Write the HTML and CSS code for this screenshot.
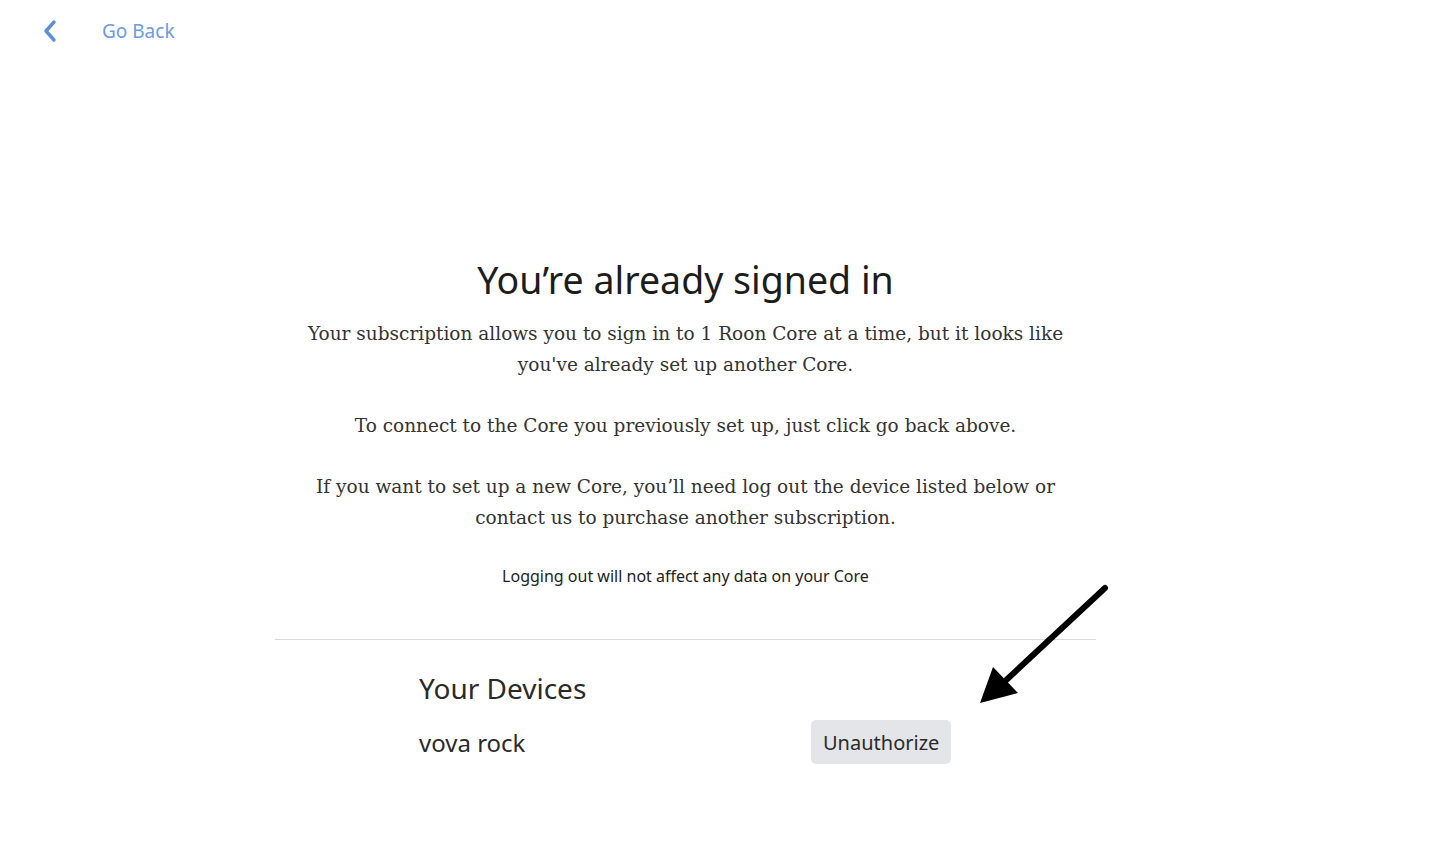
FILE: index.html
```html
<!DOCTYPE html>
<html lang="en">
<head>
<meta charset="utf-8">
<title>You're already signed in</title>
<link rel="stylesheet" href="styles.css">
</head>
<body>
<header class="topbar">
  <a class="back" href="#">
    <svg class="chev" width="16" height="24" viewBox="0 0 16 24"><path d="M12 3 L4 12 L12 21" fill="none" stroke="#5d8fd8" stroke-width="3.4" stroke-linecap="round" stroke-linejoin="round"/></svg>
    <span class="back-label">Go Back</span>
  </a>
</header>
<main class="content">
  <h1 class="title">You’re already signed in</h1>
  <p class="copy">Your subscription allows you to sign in to 1 Roon Core at a time, but it looks like<br>you've already set up another Core.</p>
  <p class="copy">To connect to the Core you previously set up, just click go back above.</p>
  <p class="copy">If you want to set up a new Core, you’ll need log out the device listed below or<br>contact us to purchase another subscription.</p>
  <p class="note">Logging out will not affect any data on your Core</p>
  <hr class="divider">
  <section class="devices">
    <h2 class="devices-title">Your Devices</h2>
    <div class="device-row">
      <span class="device-name">vova rock</span>
      <button class="unauth">Unauthorize</button>
    </div>
  </section>
</main>
<svg class="arrow" width="140" height="130" viewBox="970 580 140 130">
  <line x1="1105" y1="588" x2="1002" y2="684" stroke="#000" stroke-width="6" stroke-linecap="round"/>
  <polygon points="980,703 993,667 1018,693" fill="#000"/>
</svg>
</body>
</html>
```
FILE: styles.css
```css
html, body {
  margin: 0;
  padding: 0;
  background: #fff;
}
body {
  font-family: "Noto Sans", "Open Sans", sans-serif;
  color: #222;
  position: relative;
  min-height: 862px;
}
.topbar {
  height: 62px;
  display: flex;
  align-items: center;
  padding-left: 42px;
}
.back {
  display: flex;
  align-items: center;
  text-decoration: none;
}
.chev {
  display: block;
}
.back-label {
  margin-left: 44px;
  font-size: 19px;
  color: #6b9be0;
}
.content {
  width: 821px;
  margin-left: 275px;
  padding-top: 194px;
  text-align: center;
}
.title {
  margin: 0;
  font-size: 37.5px;
  font-weight: 400;
  color: #1c1c1c;
  line-height: 48px;
}
.copy {
  margin: 14px 0 30px;
  font-family: "DejaVu Serif", "Liberation Serif", serif;
  font-size: 18.5px;
  line-height: 31px;
  color: #333;
}
.copy + .copy {
  margin-top: 0;
}
.note {
  margin: 0;
  padding-top: 1px;
  font-size: 16px;
  color: #222;
  line-height: 24px;
}
.divider {
  margin: 51px 0 0;
  border: 0;
  border-top: 1px solid #d9d9d9;
}
.devices {
  text-align: left;
  padding-left: 144px;
  padding-top: 30px;
}
.devices-title {
  margin: 0;
  font-size: 28px;
  font-weight: 400;
  color: #2a2a2a;
  line-height: 36px;
}
.device-row {
  display: flex;
  align-items: center;
  margin-top: 14px;
}
.device-name {
  width: 392px;
  font-size: 24px;
  color: #2a2a2a;
}
.unauth {
  font-family: "Noto Sans", "Open Sans", sans-serif;
  font-size: 20px;
  color: #2a2a2a;
  background: #e3e5e9;
  border: 0;
  border-radius: 5px;
  height: 44px;
  padding: 0 12px;
}
.arrow {
  position: absolute;
  left: 970px;
  top: 580px;
}
```
